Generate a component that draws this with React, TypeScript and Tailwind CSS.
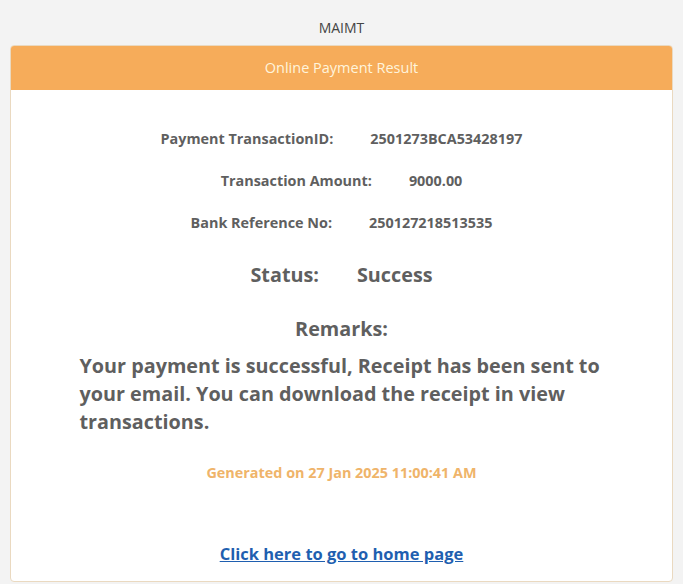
export default function App() {
  const rows = [
    ["Payment TransactionID:", "2501273BCA53428197"],
    ["Transaction Amount:", "9000.00"],
    ["Bank Reference No:", "250127218513535"],
  ];

  return (
    <div className="min-h-[584px] bg-[#f3f3f3] px-[10px] pt-[19px] pb-[2px] font-['Open_Sans',sans-serif] text-[#5f5f5f]">
      <div className="text-center text-[14px] leading-[18px] text-[#444]">MAIMT</div>
      <div className="mt-[8px] rounded-[4px] border border-[#ead9c0] bg-white">
        <div className="flex h-[44px] items-center justify-center rounded-t-[3px] bg-[#f6ac5a] text-[14.5px] text-[#fff4dc]">
          Online Payment Result
        </div>
        <div className="pt-[40px] pb-[15px]">
          <div className="flex flex-col gap-[24px]">
            {rows.map(([label, value]) => (
              <div key={label} className="flex justify-center gap-[37px] text-[14.4px] font-bold leading-[18px]">
                <span>{label}</span>
                <span>{value}</span>
              </div>
            ))}
          </div>
          <div className="mt-[30px] flex justify-center gap-[38px] text-[19.8px] font-bold leading-[26px]">
            <span>Status:</span>
            <span>Success</span>
          </div>
          <div className="mt-[28px] text-center text-[19.8px] font-bold leading-[26px]">Remarks:</div>
          <p className="mx-auto mt-[10px] w-[526px] pl-px text-[19.8px] font-bold leading-[28px]">
            Your payment is successful, Receipt has been sent to your email. You can download the receipt in view transactions.
          </p>
          <div className="mt-[28px] text-center text-[14.4px] font-bold leading-[18px] text-[#efb46a]">
            Generated on 27 Jan 2025 11:00:41 AM
          </div>
          <div className="mt-[60px] text-center">
            <a href="#" className="text-[16.5px] font-bold leading-[22px] text-[#1f5fb0] underline">
              Click here to go to home page
            </a>
          </div>
        </div>
      </div>
    </div>
  );
}
